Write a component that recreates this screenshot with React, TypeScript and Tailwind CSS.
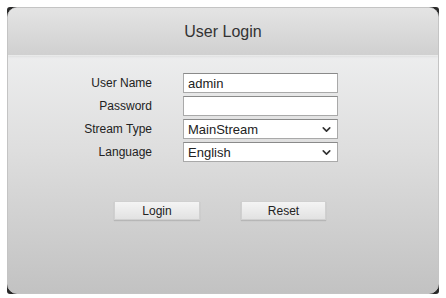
import React, { useState } from 'react';
import { ChevronDown } from 'lucide-react';

const font = { fontFamily: '"Liberation Sans", Arial, sans-serif' };

export default function App() {
  const [user, setUser] = useState('admin');
  const [pass, setPass] = useState('');
  const [stream, setStream] = useState('MainStream');
  const [lang, setLang] = useState('English');

  const labelCls = 'text-[12px] leading-[20px] text-[#222] text-right';
  const inputCls =
    'block h-[20px] w-[155px] bg-white border border-[#a9a9a9] border-t-[#8a8a8a] px-[4px] text-[13px] text-[#222] outline-none';

  return (
    <div className="w-[446px] h-[298px] bg-white pt-[7px] px-[7px] pb-[4px]" style={font}>
      <div className="h-full w-full bg-[#2a2a2a] rounded-[3px]">
        <div className="h-full w-full rounded-[10px] border border-[#c4c4c4] overflow-hidden flex flex-col bg-gradient-to-b from-[#f4f5f6] via-[#dedede] to-[#c2c2c2]">
          {/* header */}
          <div className="h-[48px] shrink-0 flex items-center justify-center bg-gradient-to-b from-[#e4e4e4] to-[#d0d0d0] border-b border-[#e9eaea] shadow-[0_1px_2px_rgba(0,0,0,0.06)]">
            <span className="text-[16px] text-[#333]">User Login</span>
          </div>

          {/* form */}
          <div className="pt-[17px] pl-[74px]">
            <div className="grid grid-cols-[70px_155px] gap-x-[31px] gap-y-[3px] items-center">
              <div className={labelCls}>User Name</div>
              <input className={inputCls} value={user} onChange={e => setUser(e.target.value)} />

              <div className={labelCls}>Password</div>
              <input type="password" className={inputCls} value={pass} onChange={e => setPass(e.target.value)} />

              <div className={labelCls}>Stream Type</div>
              <div className="relative h-[20px]">
                <select
                  className={`${inputCls} appearance-none pl-[4px]`}
                  value={stream}
                  onChange={e => setStream(e.target.value)}
                >
                  <option>MainStream</option>
                  <option>SubStream</option>
                </select>
                <ChevronDown className="absolute right-[5px] top-[4px] w-[13px] h-[13px] text-[#333] pointer-events-none" strokeWidth={3} />
              </div>

              <div className={labelCls}>Language</div>
              <div className="relative h-[20px]">
                <select
                  className={`${inputCls} appearance-none pl-[4px]`}
                  value={lang}
                  onChange={e => setLang(e.target.value)}
                >
                  <option>English</option>
                  <option>中文</option>
                </select>
                <ChevronDown className="absolute right-[5px] top-[4px] w-[13px] h-[13px] text-[#333] pointer-events-none" strokeWidth={3} />
              </div>
            </div>

            <div className="flex gap-[41px] pt-[39px] pl-[32px]">
              <button className="h-[19px] w-[86px] text-[12px] text-[#222] bg-gradient-to-b from-[#f4f4f4] to-[#e2e2e2] border border-[#d0d0d0] shadow-[0_1px_1px_rgba(0,0,0,0.12)]">
                Login
              </button>
              <button className="h-[19px] w-[85px] text-[12px] text-[#222] bg-gradient-to-b from-[#f4f4f4] to-[#e2e2e2] border border-[#d0d0d0] shadow-[0_1px_1px_rgba(0,0,0,0.12)]">
                Reset
              </button>
            </div>
          </div>
        </div>
      </div>
    </div>
  );
}
